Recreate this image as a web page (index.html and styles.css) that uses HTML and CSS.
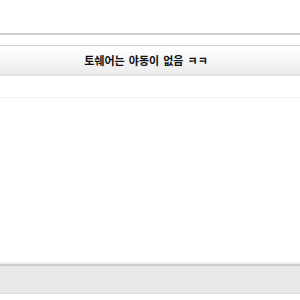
FILE: index.html
```html
<!DOCTYPE html>
<html lang="ko">
<head>
<meta charset="utf-8">
<link rel="stylesheet" href="styles.css">
</head>
<body>
<div class="page">
  <div class="top-space"></div>
  <div class="rule"></div>
  <div class="gap"></div>
  <div class="title-bar">토쉐어는 야동이 없음 ㅋㅋ</div>
  <div class="content"></div>
  <div class="footer"></div>
</div>
</body>
</html>
```
FILE: styles.css
```css
html, body {
  margin: 0;
  padding: 0;
  background: #fff;
}
.page {
  width: 300px;
  height: 300px;
  display: flex;
  flex-direction: column;
  font-family: "Noto Sans CJK KR", "Noto Sans", sans-serif;
}
.top-space {
  height: 33px;
}
.rule {
  height: 2px;
  background: #cfcfcf;
}
.gap {
  height: 10px;
}
.title-bar {
  height: 28px;
  box-sizing: content-box;
  border-top: 1px solid #d2d2d2;
  border-bottom: 2px solid #e2e2e2;
  background: linear-gradient(to bottom, #ffffff, #ececec);
  display: flex;
  align-items: center;
  justify-content: center;
  padding-right: 8px;
  font-size: 11px;
  font-weight: bold;
  color: #111;
  word-spacing: 1px;
}
.content {
  flex: 1;
  border-top: 1px solid #fff;
  background: linear-gradient(to bottom, #fff 20px, #f3f3f3 20px, #f3f3f3 21px, #fff 21px);
  border-bottom: 2px solid #f0f0f0;
}
.footer {
  height: 27px;
  border-top: 2px solid #cdcdcd;
  border-bottom: 1px solid #dedede;
  background: #e8e8e8;
  margin-bottom: 6px;
}
```
